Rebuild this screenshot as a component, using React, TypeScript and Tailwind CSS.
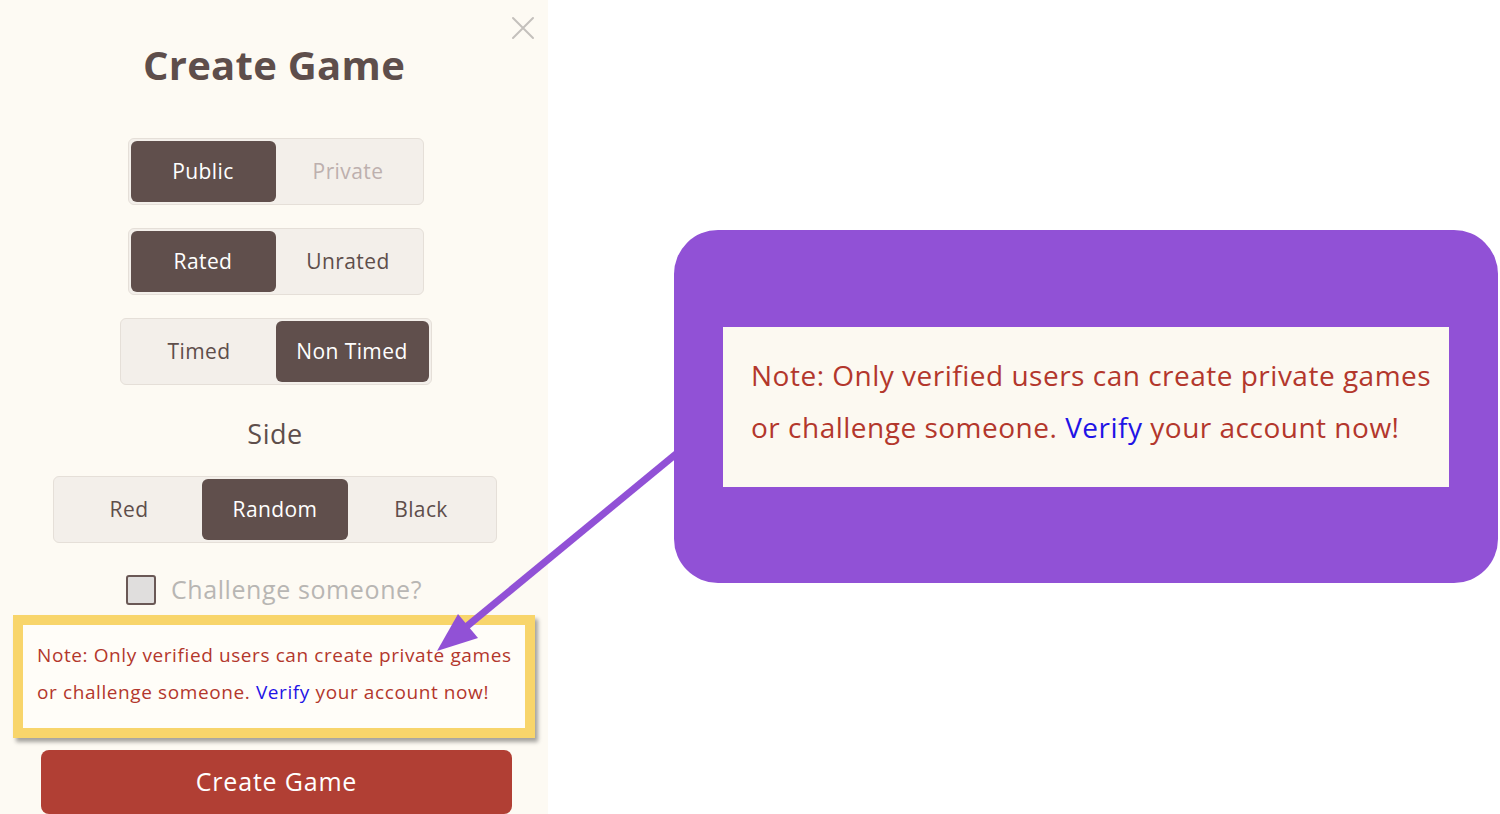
import { useState } from 'react';

const font = { fontFamily: '"Open Sans", "Noto Sans", sans-serif' };

type ToggleProps = {
  options: string[];
  value: string;
  onChange: (v: string) => void;
  width: string;
  muted?: boolean;
};

function ToggleGroup({ options, value, onChange, width, muted }: ToggleProps) {
  return (
    <div className="flex rounded-md border border-[#e5dfd8] bg-[#f3efea] p-[2px]">
      {options.map((opt) => {
        const active = opt === value;
        return (
          <button
            key={opt}
            onClick={() => onChange(opt)}
            className={`${width} h-[61px] rounded-md text-[21px] tracking-[0.4px] ${
              active
                ? 'bg-[#604f4c] text-white'
                : muted
                  ? 'text-[#bdb0ae]'
                  : 'text-[#5e4e4b]'
            }`}
          >
            {opt}
          </button>
        );
      })}
    </div>
  );
}

function NoteText({ className }: { className: string }) {
  return (
    <p className={`whitespace-nowrap text-[#b3372c] ${className}`}>
      Note: Only verified users can create private games
      <br />
      or challenge someone. <span className="text-[#1f14e6]">Verify</span> your account now!
    </p>
  );
}

export default function App() {
  const [visibility, setVisibility] = useState('Public');
  const [rated, setRated] = useState('Rated');
  const [timed, setTimed] = useState('Non Timed');
  const [side, setSide] = useState('Random');
  const [challenge, setChallenge] = useState(false);

  return (
    <div className="relative flex h-[814px] w-[1500px] overflow-hidden bg-white" style={font}>
      {/* modal panel */}
      <div className="relative flex h-[814px] w-[548px] flex-col items-center bg-[#fdfaf3]">
        <button className="absolute right-[13px] top-[16px] h-[24px] w-[24px]" aria-label="Close">
          <svg viewBox="0 0 24 24" className="h-[24px] w-[24px]" fill="none" stroke="#c4c0bc" strokeWidth="2" strokeLinecap="round">
            <path d="M2 2 L22 22 M22 2 L2 22" />
          </svg>
        </button>

        <h1 className="mt-[41px] h-[48px] text-[40px] font-bold leading-[48px] tracking-[0.3px] text-[#5e4e4b]">Create Game</h1>

        <div className="mt-[49px] ml-[3px]">
          <ToggleGroup options={['Public', 'Private']} value={visibility} onChange={setVisibility} width="w-[145px]" muted />
        </div>
        <div className="mt-[23px] ml-[3px]">
          <ToggleGroup options={['Rated', 'Unrated']} value={rated} onChange={setRated} width="w-[145px]" />
        </div>
        <div className="mt-[23px] ml-[3px]">
          <ToggleGroup options={['Timed', 'Non Timed']} value={timed} onChange={setTimed} width="w-[153px]" />
        </div>

        <div className="mt-[31px] ml-[2px] h-[36px] text-[27px] leading-[36px] tracking-[0.5px] text-[#5e4e4b]">Side</div>

        <div className="mt-[24px] ml-[2px]">
          <ToggleGroup options={['Red', 'Random', 'Black']} value={side} onChange={setSide} width="w-[146px]" />
        </div>

        <label className="mt-[31px] flex h-[32px] items-center gap-[15px]">
          <span
            onClick={() => setChallenge(!challenge)}
            className="h-[30px] w-[30px] rounded-[3px] border-2 border-[#6a5855] bg-[#e0dedd]"
          />
          <span className="text-[25px] tracking-[0.6px] text-[#b8b6b3]">Challenge someone?</span>
        </label>

        <div className="mt-[9px] w-[522px] border-[10px] border-[#f8d56b] bg-[#fffdf8] px-[14px] pb-[17px] pt-[12px] shadow-[3px_4px_4px_rgba(0,0,0,0.35)]">
          <NoteText className="text-[19px] leading-[37px] tracking-[0.6px]" />
        </div>

        <button className="mt-[12px] ml-[5px] h-[64px] w-[471px] rounded-lg bg-[#b13f34] text-[25px] tracking-[0.8px] text-white">
          Create Game
        </button>
      </div>

      {/* zoomed callout */}
      <div className="flex-1 pl-[126px] pt-[230px]">
        <div className="flex h-[353px] w-[824px] items-center justify-center rounded-[44px] bg-[#9151d6]">
          <div className="h-[160px] w-[726px] bg-[#fcf9f1] px-[28px] pt-[22px]">
            <NoteText className="text-[28px] leading-[52px] tracking-[0.5px]" />
          </div>
        </div>
      </div>

      {/* pointer arrow */}
      <svg className="pointer-events-none absolute left-0 top-0" width="1500" height="814" viewBox="0 0 1500 814">
        <line x1="676" y1="454" x2="466" y2="627" stroke="#9151d6" strokeWidth="7" />
        <polygon points="437,651 478,638 458,614" fill="#9151d6" />
      </svg>
    </div>
  );
}
